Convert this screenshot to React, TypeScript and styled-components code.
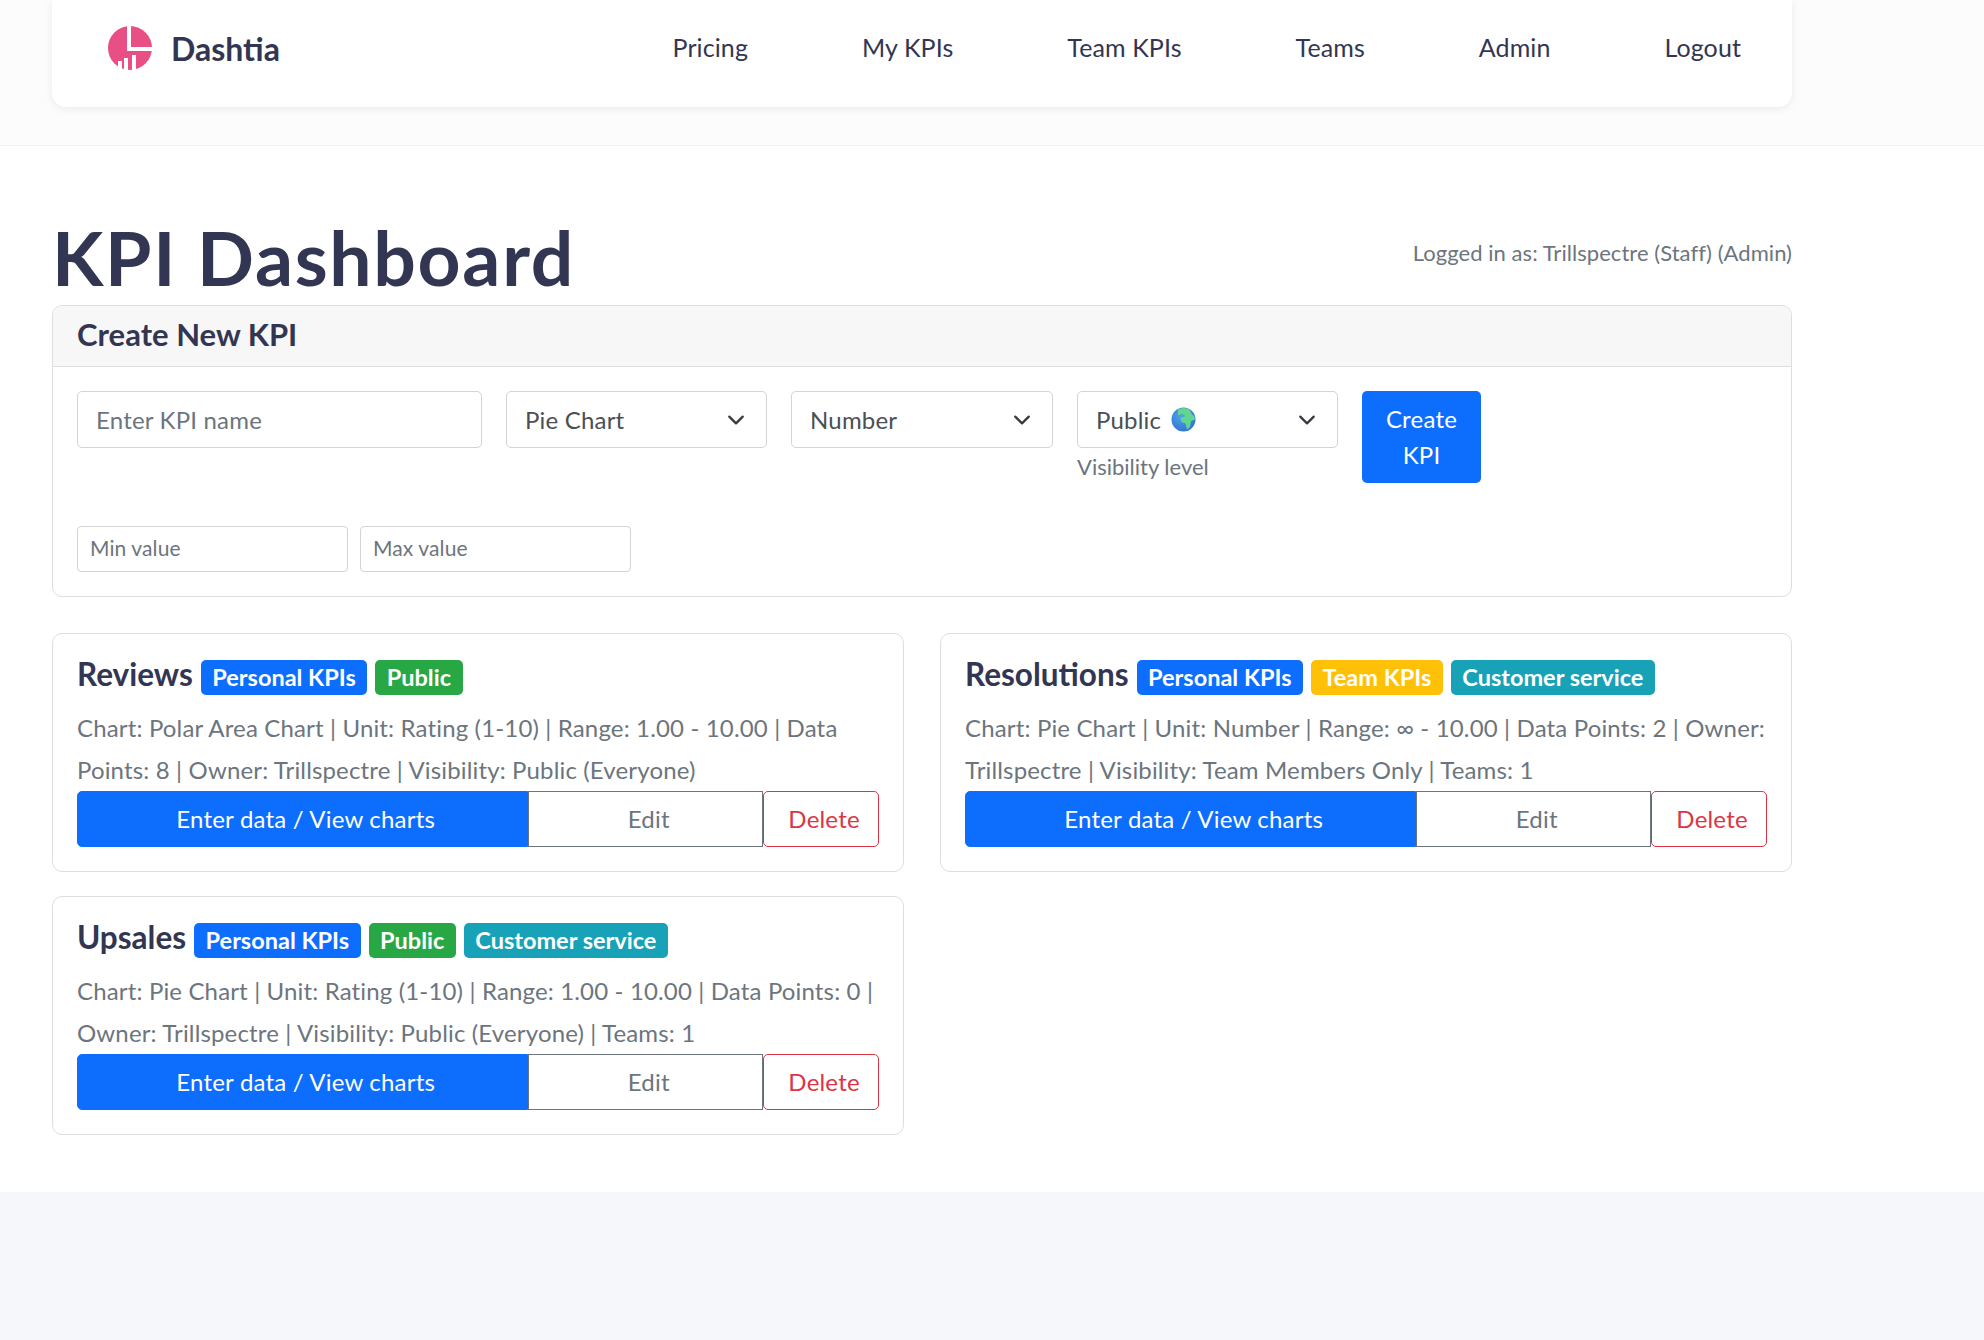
import React from "react";
import styled, { createGlobalStyle } from "styled-components";

const GlobalStyle = createGlobalStyle`
    * { box-sizing: border-box; }
    html, body { margin: 0; padding: 0; }
    body {
        background: #f5f7fb;
        font-family: "Lato", "Open Sans", sans-serif;
        color: #6c757d;
    }
`;

const Header = styled.header`
    height: 146px;
    padding: 0 52px;
    background: #fcfcfc;
    border-bottom: 1px solid #f1f1f1;
`;

const NavCard = styled.nav`
    width: 1740px;
    height: 107px;
    padding: 0 51px 11px 55px;
    display: flex;
    align-items: center;
    justify-content: space-between;
    background: #fff;
    border-radius: 0 0 14px 14px;
    box-shadow: 0 2px 8px rgba(0, 0, 0, 0.07);
`;

const Brand = styled.a`
    display: flex;
    align-items: center;
    gap: 18px;
    font-size: 32px;
    font-weight: 700;
    color: #333652;
`;

const NavLinks = styled.div`
    display: flex;
    gap: 114px;
`;

const NavLink = styled.a`
    margin-top: -2px;
    font-size: 25px;
    letter-spacing: 0.1px;
    color: #333652;
`;

const Main = styled.main`
    height: 1046px;
    padding: 72px 52px 0;
    background: #fff;
`;

const Container = styled.div`
    width: 1740px;
`;

const TitleRow = styled.div`
    height: 87px;
    display: flex;
    justify-content: space-between;
    align-items: flex-start;
`;

const Title = styled.h1`
    margin: 0;
    font-size: 75px;
    letter-spacing: 1.7px;
    line-height: 79px;
    font-weight: 700;
    color: #333652;
`;

const LoggedIn = styled.span`
    font-size: 22px;
    letter-spacing: 0.05px;
    margin-top: 21px;
`;

const Card = styled.section`
    border: 1px solid #dedede;
    border-radius: 10px;
    background: #fff;
`;

const CreateHeader = styled.div`
    height: 61px;
    padding: 0 24px 4px;
    display: flex;
    align-items: center;
    background: #f7f7f7;
    border-bottom: 1px solid #dedede;
    border-radius: 10px 10px 0 0;
    font-size: 31px;
    font-weight: 700;
    color: #333652;
`;

const CreateBody = styled.div`
    padding: 24px;
`;

const FormRow = styled.div`
    display: flex;
    align-items: flex-start;
    gap: 24px;
    height: 135px;
`;

const Input = styled.div<{ $w: number }>`
    width: ${p => p.$w}px;
    height: 57px;
    padding: 0 21px 0 18px;
    display: flex;
    align-items: center;
    border: 1px solid #d3d3d8;
    border-radius: 5px;
    font-size: 24px;
    letter-spacing: 0.2px;
    color: #6c757d;
`;

const Select = styled(Input)`
    justify-content: space-between;
    color: #4a4f55;
`;

const SelectValue = styled.span`
    display: flex;
    align-items: center;
    gap: 10px;
`;

const Hint = styled.div`
    margin-top: 5px;
    font-size: 22px;
    color: #6c757d;
`;

const CreateButton = styled.button`
    width: 119px;
    height: 92px;
    border: 0;
    border-radius: 5px;
    background: #0d6efd;
    color: #fff;
    font: inherit;
    font-size: 24px;
    letter-spacing: 0.2px;
    line-height: 36px;
`;

const SmallRow = styled.div`
    display: flex;
    gap: 12px;
`;

const SmallInput = styled.div`
    width: 271px;
    height: 46px;
    padding: 0 12px 3px;
    display: flex;
    align-items: center;
    border: 1px solid #d3d3d8;
    border-radius: 4px;
    font-size: 21px;
    letter-spacing: 0.1px;
`;

const Grid = styled.div`
    margin-top: 36px;
    display: grid;
    grid-template-columns: 852px 852px;
    column-gap: 36px;
    row-gap: 24px;
`;

const KpiBody = styled.div`
    height: 237px;
    padding: 24px;
`;

const KpiHead = styled.div`
    height: 38px;
    display: flex;
    align-items: center;
    gap: 8px;
`;

const KpiName = styled.h5`
    margin: 0 0 7px;
    font-size: 31.5px;
    font-weight: 700;
    color: #333652;
`;

const Badge = styled.span<{ $bg: string }>`
    height: 35px;
    padding: 0 11.5px;
    display: flex;
    align-items: center;
    border-radius: 5px;
    background: ${p => p.$bg};
    color: #fff;
    font-size: 23.5px;
    font-weight: 700;
`;

const KpiText = styled.p`
    margin: 11px 0 0;
    font-size: 24px;
    letter-spacing: 0.15px;
    line-height: 42px;
`;

const Actions = styled.div`
    display: flex;
`;

const ActionButton = styled.button<{ $w: number }>`
    width: ${p => p.$w}px;
    height: 56px;
    padding: 0 0 2px 6px;
    background: #fff;
    border: 1px solid #6c757d;
    color: #6c757d;
    font: inherit;
    font-size: 24px;
    letter-spacing: 0.2px;
`;

const PrimaryAction = styled(ActionButton)`
    background: #0d6efd;
    border-color: #0d6efd;
    color: #fff;
    border-radius: 5px 0 0 5px;
`;

const DangerAction = styled(ActionButton)`
    border-color: #dc3545;
    color: #dc3545;
    border-radius: 5px;
`;

const Logo = () => (
    <svg width="46" height="46" viewBox="0 0 46 46">
        <circle cx="23" cy="23" r="22" fill="#e84f85" />
        <path d="M22 0v24h24" fill="none" stroke="#fff" strokeWidth="4" />
        <path d="M13 36v10M19 33v13M27 30v16" stroke="#fff" strokeWidth="4" />
    </svg>
);

const Chevron = () => (
    <svg width="18" height="18" viewBox="0 0 16 16">
        <path d="M2 5l6 6 6-6" fill="none" stroke="#343a40" strokeWidth="2" strokeLinecap="round" strokeLinejoin="round" />
    </svg>
);

const Globe = () => (
    <svg width="25" height="25" viewBox="0 0 25 25">
        <defs>
            <radialGradient id="sea" cx="0.4" cy="0.35" r="0.75">
                <stop offset="0" stopColor="#4fa3e8" />
                <stop offset="1" stopColor="#2f6fd0" />
            </radialGradient>
        </defs>
        <circle cx="12.5" cy="12.5" r="12" fill="url(#sea)" />
        <path d="M7 2.500c4-2 8-2 11.500 0l2.500 5c2 1 3 2.500 3 5l-4 1.500-1 6-3 2.500-1.500-6-4-1.500-1-4 5-2-3-2-4.500 1z" fill="#62d68f" />
    </svg>
);

const kpis = [
    {
        name: "Reviews",
        badges: [["Personal KPIs", "#0d6efd"], ["Public", "#28a745"]],
        text: "Chart: Polar Area Chart | Unit: Rating (1-10) | Range: 1.00 - 10.00 | Data Points: 8 | Owner: Trillspectre | Visibility: Public (Everyone)",
    },
    {
        name: "Resolutions",
        badges: [["Personal KPIs", "#0d6efd"], ["Team KPIs", "#ffc107"], ["Customer service", "#17a2b8"]],
        text: "Chart: Pie Chart | Unit: Number | Range: ∞ - 10.00 | Data Points: 2 | Owner: Trillspectre | Visibility: Team Members Only | Teams: 1",
    },
    {
        name: "Upsales",
        badges: [["Personal KPIs", "#0d6efd"], ["Public", "#28a745"], ["Customer service", "#17a2b8"]],
        text: "Chart: Pie Chart | Unit: Rating (1-10) | Range: 1.00 - 10.00 | Data Points: 0 | Owner: Trillspectre | Visibility: Public (Everyone) | Teams: 1",
    },
];

export default function App() {
    return (
        <>
            <GlobalStyle />
            <Header>
                <NavCard>
                    <Brand><Logo />Dashtia</Brand>
                    <NavLinks>
                        {["Pricing", "My KPIs", "Team KPIs", "Teams", "Admin", "Logout"].map(l => (
                            <NavLink key={l}>{l}</NavLink>
                        ))}
                    </NavLinks>
                </NavCard>
            </Header>
            <Main>
                <Container>
                    <TitleRow>
                        <Title>KPI Dashboard</Title>
                        <LoggedIn>Logged in as: Trillspectre (Staff) (Admin)</LoggedIn>
                    </TitleRow>
                    <Card>
                        <CreateHeader>Create New KPI</CreateHeader>
                        <CreateBody>
                            <FormRow>
                                <Input $w={405}>Enter KPI name</Input>
                                <Select $w={261}>Pie Chart<Chevron /></Select>
                                <Select $w={262}>Number<Chevron /></Select>
                                <div>
                                    <Select $w={261}>
                                        <SelectValue>Public <Globe /></SelectValue>
                                        <Chevron />
                                    </Select>
                                    <Hint>Visibility level</Hint>
                                </div>
                                <CreateButton>Create KPI</CreateButton>
                            </FormRow>
                            <SmallRow>
                                <SmallInput>Min value</SmallInput>
                                <SmallInput>Max value</SmallInput>
                            </SmallRow>
                        </CreateBody>
                    </Card>
                    <Grid>
                        {kpis.map(k => (
                            <Card key={k.name}>
                                <KpiBody>
                                    <KpiHead>
                                        <KpiName>{k.name}</KpiName>
                                        {k.badges.map(([label, bg]) => (
                                            <Badge key={label} $bg={bg}>{label}</Badge>
                                        ))}
                                    </KpiHead>
                                    <KpiText>{k.text}</KpiText>
                                    <Actions>
                                        <PrimaryAction $w={452}>Enter data / View charts</PrimaryAction>
                                        <ActionButton $w={235}>Edit</ActionButton>
                                        <DangerAction $w={116}>Delete</DangerAction>
                                    </Actions>
                                </KpiBody>
                            </Card>
                        ))}
                    </Grid>
                </Container>
            </Main>
        </>
    );
}
